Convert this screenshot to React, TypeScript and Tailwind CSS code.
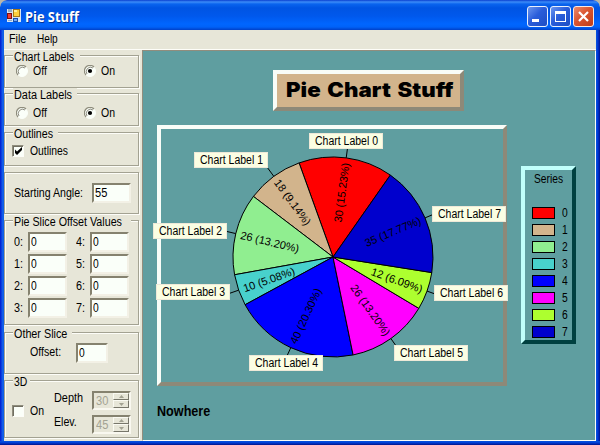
import { useLayoutEffect, useRef, useState, type ReactNode } from "react";

/** Text squeezed or stretched horizontally to a given advance width. */
function Fit({ w, className = "", children }: { w: number; className?: string; children: string }) {
  const ref = useRef<HTMLSpanElement>(null);
  const [scale, setScale] = useState(1);
  useLayoutEffect(() => {
    if (ref.current) setScale(w / ref.current.offsetWidth);
  }, [w, children]);
  return (
    <span className={"block shrink-0 whitespace-nowrap " + className} style={{ width: w }}>
      <span ref={ref} className="inline-block origin-left" style={{ transform: `scaleX(${scale})` }}>
        {children}
      </span>
    </span>
  );
}

function Group({ title, w = 0, gap = 0, className, children }: { title?: string; w?: number; gap?: number; className: string; children: ReactNode }) {
  return (
    <section className={"w-[135px] border border-[#a3a292] shadow-[1px_1px_0_#fdfdf8,inset_1px_1px_0_#fdfdf8] " + className}>
      {title ? (
        <div className="-mt-[6px] ml-[8px] h-[14px] bg-[#e7e6d8] pl-px" style={{ width: w + gap }}>
          <Fit w={w}>{title}</Fit>
        </div>
      ) : null}
      {children}
    </section>
  );
}

function Radio({ on }: { on?: boolean }) {
  return (
    <svg width="12" height="12" viewBox="0 0 12 12" className="shrink-0">
      <circle cx="6" cy="6" r="5.5" fill="#fbfff9" stroke="#fbfff9" />
      <path d="M2 10A5.5 5.5 0 0 1 10 2" fill="none" stroke="#8f8d7d" strokeWidth="1.2" />
      <path d="M3 9A4.3 4.3 0 0 1 9 3" fill="none" stroke="#716f62" strokeWidth=".8" />
      {on ? <circle cx="6" cy="6" r="2.1" fill="#000" /> : null}
    </svg>
  );
}

function Check({ on }: { on?: boolean }) {
  return (
    <div className="h-[12px] w-[12px] shrink-0 border border-t-[#8f8d7d] border-r-[#fdfdf8] border-b-[#fdfdf8] border-l-[#8f8d7d] bg-[#fbfff9] shadow-[inset_1px_1px_0_#716f62]">
      {on ? (
        <svg width="10" height="10" viewBox="0 0 10 10">
          <path d="M2 3.5L4 5.5L9 1V4L4 9L2 7Z" fill="#000" />
        </svg>
      ) : null}
    </div>
  );
}

function Box({ value, className }: { value: string; className: string }) {
  return (
    <div className={"h-[20px] shrink-0 border-2 border-t-[#85826f] border-r-[#f3f1e6] border-b-[#f3f1e6] border-l-[#85826f] bg-[#fafff9] pt-[1px] pl-[1px] " + className}>
      <Fit w={value.length * 6}>{value}</Fit>
    </div>
  );
}

function Spin({ value }: { value: string }) {
  return (
    <div className="flex h-[19px] w-[39px] border-2 border-t-[#85826f] border-r-[#f9f8f0] border-b-[#f9f8f0] border-l-[#85826f] text-[#a3a292]">
      <Fit w={12} className="ml-[2px] pt-[1px]">{value}</Fit>
      <div className="ml-auto flex w-[16px] flex-col">
        <div className="flex h-[7px] items-center justify-center border border-t-[#fafaf2] border-r-[#77766a] border-b-[#77766a] border-l-[#fafaf2]">
          <svg width="5" height="3"><path d="M0 3L2.5 0L5 3Z" fill="#a3a292" /></svg>
        </div>
        <div className="flex h-[8px] items-center justify-center border border-t-[#fafaf2] border-r-[#77766a] border-b-[#77766a] border-l-[#fafaf2]">
          <svg width="5" height="3"><path d="M0 0L2.5 3L5 0Z" fill="#a3a292" /></svg>
        </div>
      </div>
    </div>
  );
}

function OffOn({ className }: { className: string }) {
  return (
    <div className={"ml-[11px] flex items-center " + className}>
      <Radio />
      <Fit w={14} className="ml-[5px]">Off</Fit>
      <div className="w-[37px]" />
      <Radio on />
      <Fit w={14} className="ml-[5px]">On</Fit>
    </div>
  );
}

function Sidebar() {
  return (
    <aside className="h-[391px] w-[138px] shrink-0 bg-[#e7e6d8] pt-[5px]">
      <Group title="Chart Labels" w={60} gap={7} className="h-[33px]"><OffOn className="mt-0" /></Group>
      <Group title="Data Labels" w={58} gap={6} className="mt-[5px] h-[33px]"><OffOn className="mt-[4px]" /></Group>
      <Group title="Outlines" w={39} gap={6} className="mt-[6px] h-[34px]">
        <div className="mt-[3px] ml-[7px] flex items-center gap-[6px]"><Check on /><Fit w={38}>Outlines</Fit></div>
      </Group>
      <Group className="mt-[6px] h-[42px]">
        <div className="mt-[10px] ml-[9px] flex items-center"><Fit w={69}>Starting Angle:</Fit><Box value="55" className="ml-[9px] w-[39px]" /></div>
      </Group>
      <Group title="Pie Slice Offset Values" w={108} gap={10} className="mt-[6px] h-[105px]">
        <div className="mt-[3px] ml-[9px] flex flex-col gap-[2px]">
          {[0, 1, 2, 3].map((n) => (
            <div key={n} className="flex items-center">
              <Fit w={9}>{n + ":"}</Fit><Box value="0" className="ml-[5px] w-[39px]" />
              <Fit w={9} className="ml-[9px]">{n + 4 + ":"}</Fit><Box value="0" className="ml-[5px] w-[39px]" />
            </div>
          ))}
        </div>
      </Group>
      <Group title="Other Slice" w={53} gap={6} className="mt-[7px] h-[42px]">
        <div className="mt-[2px] ml-[25px] flex items-start"><Fit w={31} className="mt-[2px]">Offset:</Fit><Box value="0" className="ml-[15px] w-[32px]" /></div>
      </Group>
      <Group title="3D" w={13} gap={4} className="mt-[6px] h-[58px]">
        <div className="ml-[7px] flex">
          <div className="mt-[15px] flex items-center gap-[6px] self-start"><Check /><Fit w={14}>On</Fit></div>
          <div className="mt-[2px] ml-[10px] w-[38px]"><Fit w={29}>Depth</Fit><Fit w={23} className="mt-[10px]">Elev.</Fit></div>
          <div className="mt-[2px] flex flex-col gap-[5px]"><Spin value="30" /><Spin value="45" /></div>
        </div>
      </Group>
    </aside>
  );
}

const SERIES = [
  { v: 30, color: "#ff0000", x: 309, y: 133 },
  { v: 18, color: "#d2b48c", x: 194, y: 152 },
  { v: 26, color: "#90ee90", x: 153, y: 223 },
  { v: 10, color: "#48d1cc", x: 156, y: 284 },
  { v: 40, color: "#0000ff", x: 249, y: 355 },
  { v: 26, color: "#ff00ff", x: 394, y: 345 },
  { v: 12, color: "#adff2f", x: 434, y: 285 },
  { v: 35, color: "#0000cd", x: 432, y: 206 },
];
const CX = 333;
const CY = 257;
const R = 100;
const TOTAL = SERIES.reduce((a, s) => a + s.v, 0);
const at = (deg: number, r: number): [number, number] => [
  CX + r * Math.cos((deg * Math.PI) / 180),
  CY - r * Math.sin((deg * Math.PI) / 180),
];

function Pie() {
  let angle = 55;
  const slices = SERIES.map((s) => {
    const a0 = angle;
    angle += (s.v / TOTAL) * 360;
    return { ...s, a0, a1: angle, mid: (a0 + angle) / 2, text: `${s.v} (${((s.v / TOTAL) * 100).toFixed(2)}%)` };
  });
  return (
    <svg width="342" height="253" viewBox="161 129 342 253" className="overflow-visible font-['Liberation_Sans',Arial,sans-serif]">
      {slices.map((s, i) => (
        <path key={i} d={`M${CX} ${CY}L${at(s.a0, R)}A${R} ${R} 0 0 0 ${at(s.a1, R)}Z`} fill={s.color} stroke="#000" strokeWidth="1" />
      ))}
      {slices.map((s, i) => {
        const flip = s.mid > 90 && s.mid < 270;
        const len = s.text.length > 10 ? 60 : 54;
        const [tx, ty] = at(s.mid, 95 - len / 2);
        const [x1, y1] = at(s.mid, R);
        const [x2, y2] = at(s.mid, 111);
        return (
          <g key={i}>
            <path d={`M${x1} ${y1}L${x2} ${y2}`} stroke="#000" />
            <text fontSize="11" textAnchor="middle" textLength={len} lengthAdjust="spacingAndGlyphs" transform={`translate(${tx} ${ty}) rotate(${flip ? 180 - s.mid : -s.mid})`} y="4">
              {s.text}
            </text>
          </g>
        );
      })}
      {slices.map((s, i) => (
        <g key={i}>
          <rect x={s.x + 0.5} y={s.y + 0.5} width="73" height="15" fill="#fbfee3" stroke="#eee9d8" />
          <text x={s.x + 6} y={s.y + 12} fontSize="12" textLength="63" lengthAdjust="spacingAndGlyphs">{`Chart Label ${i}`}</text>
        </g>
      ))}
    </svg>
  );
}

function ChartPane() {
  return (
    <main className="h-[391px] flex-1 border-t border-r border-b border-l border-t-[#918d7d] border-r-[#fbfdf8] border-b-[#fbfdf8] border-l-[#918d7d] bg-[#5f9ea0]">
      <div className="mt-[19px] ml-[130px] flex h-[41px] w-[191px] items-center border-4 border-t-[#f9fdf8] border-r-[#8d8978] border-b-[#8d8978] border-l-[#f9fdf8] bg-[#d2b48c] pl-[9px] font-['Inter',sans-serif] text-[20px] leading-[24px] font-black [word-spacing:2px]">
        <Fit w={167} className="-mt-px">Pie Chart Stuff</Fit>
      </div>
      <div className="mt-[14px] ml-[14px] flex items-start gap-[14px]">
        <div className="h-[261px] w-[350px] border-4 border-t-[#f9fdf8] border-r-[#8d8978] border-b-[#8d8978] border-l-[#f9fdf8]">
          <Pie />
        </div>
        <div className="mt-[41px] h-[178px] w-[55px] border-4 border-t-[#c0fffb] border-r-[#004040] border-b-[#004040] border-l-[#c0fffb] pt-[2px]">
          <Fit w={29} className="ml-[9px]">Series</Fit>
          <div className="mt-[20px] ml-[7px] flex flex-col gap-[3px]">
            {SERIES.map((s, i) => (
              <div key={i} className="flex h-[14px] items-center gap-[7px]">
                <div className="h-[12px] w-[23px] border border-black" style={{ backgroundColor: s.color }} />
                <Fit w={6}>{String(i)}</Fit>
              </div>
            ))}
          </div>
        </div>
      </div>
      <div className="mt-[17px] ml-[14px] text-[15px] leading-[16px] font-bold"><Fit w={53}>Nowhere</Fit></div>
    </main>
  );
}

function TitleBar() {
  return (
    <header className="flex h-[30px] shrink-0 rounded-t-[7px] bg-[linear-gradient(#0a3fcf_0px,#3c8cf8_2px,#0a64ee_4px,#0054e3_8px,#0058ec_16px,#0066ff_24px,#0062f8_27px,#0040c8_30px)] pt-[6px] pl-[7px]">
      <svg width="15" height="16" viewBox="0 0 15 16" className="mt-[2px]">
        <path d="M0 1H14V14H0Z" fill="#d8e4ef" />
        <path d="M6 1H13V9H6Z" fill="#a87916" /><path d="M7 2H12V8H7Z" fill="#ffd13c" /><path d="M7 2H10V4H7Z" fill="#fff09a" />
        <path d="M0 5H5V11H0Z" fill="#7d0e12" /><path d="M1 6H4V10H1Z" fill="#ee3c34" />
        <path d="M6 10H11V14H6Z" fill="#194faf" /><path d="M7 11H10V13H7Z" fill="#6da5f7" />
        <path d="M1 1H5V4H1ZM1 12H5V13H1Z" fill="#91a9c7" />
      </svg>
      <div className="mt-[1px] ml-[3px] font-['Open_Sans',sans-serif] text-[14px] leading-[20px] font-bold text-white [text-shadow:1px_1px_0_#003295]">
        <Fit w={54}>Pie Stuff</Fit>
      </div>
      <div className="mr-[6px] ml-auto flex gap-[2px]">
        <div className="h-[21px] w-[21px] rounded-[3px] border border-[#e9f0fc] bg-[linear-gradient(135deg,#6b96ef,#2a5dda_45%,#1d4dc4)]">
          <svg width="19" height="19"><path d="M4 12H11V15H4Z" fill="#fff" /></svg>
        </div>
        <div className="h-[21px] w-[21px] rounded-[3px] border border-[#e9f0fc] bg-[linear-gradient(135deg,#6b96ef,#2a5dda_45%,#1d4dc4)]">
          <svg width="19" height="19"><path d="M4 4H15V15H4ZM5 7V14H14V7Z" fill="#fff" fillRule="evenodd" /></svg>
        </div>
        <div className="h-[21px] w-[21px] rounded-[3px] border border-[#f8e9e4] bg-[linear-gradient(135deg,#ec8b6c,#da5530_45%,#be3d18)]">
          <svg width="19" height="19"><path d="M5 5L14 14M14 5L5 14" stroke="#fff" strokeWidth="2.2" /></svg>
        </div>
      </div>
    </header>
  );
}

export default function App() {
  return (
    <div className="h-[445px] w-[600px] overflow-hidden bg-[#b8b5aa]">
      <div className="flex h-[445px] w-[600px] flex-col overflow-hidden rounded-t-[7px] font-['Liberation_Sans',Arial,sans-serif] text-[12px] leading-[14px] text-black">
        <TitleBar />
        <div className="flex h-[411px] bg-[linear-gradient(90deg,#0019cf_0px,#0831d9_1px,#166aee_3px,#0855dd_4px,#0855dd_596px,#0347dd_597px,#0033d0_598px,#00138c_600px)] px-[4px]">
          <div className="flex w-[592px] flex-col bg-[#e7e6d8]">
            <nav className="flex h-[20px] gap-[11px] border-b border-[#fdfdf8] pt-[2px] pl-[5px]">
              <Fit w={17}>File</Fit><Fit w={21}>Help</Fit>
            </nav>
            <div className="flex"><Sidebar /><ChartPane /></div>
          </div>
        </div>
        <footer className="h-[4px] bg-[linear-gradient(#0855dd,#0040d8_40%,#00138c)]" />
      </div>
    </div>
  );
}
